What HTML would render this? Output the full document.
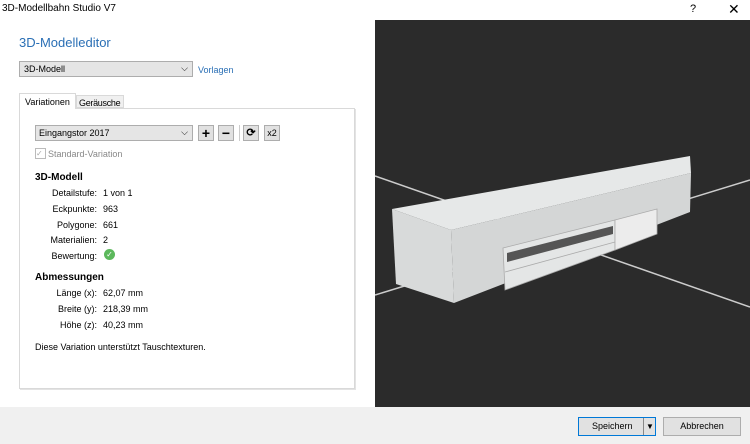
<!DOCTYPE html>
<html><head><style>
body{margin:0;width:750px;height:444px;overflow:hidden;font-family:"Liberation Sans",sans-serif;font-size:9px;color:#000;background:#fff;position:relative}
.a{position:absolute}
.lbl{position:absolute;width:97px;text-align:right;left:0}
.btn{position:absolute;height:16px;border:1px solid #adadad;background:#e1e1e1;box-sizing:border-box;text-align:center;line-height:14px}
</style></head><body>
<div class="a" style="left:2px;top:3px;font-size:10px">3D-Modellbahn Studio V7</div>
<div class="a" style="left:690px;top:3px;font-size:11px">?</div>
<div class="a" style="left:728px;top:1px;font-size:14px">✕</div>
<div class="a" style="left:19px;top:35px;font-size:13px;color:#2a6fb5">3D-Modelleditor</div>
<div class="a" style="left:19px;top:61px;width:174px;height:16px;border:1px solid #adadad;background:#e5e5e5;box-sizing:border-box;padding:2px 4px">3D-Modell<span style="position:absolute;right:4px;top:1px">⌵</span></div>
<div class="a" style="left:198px;top:65px;color:#2a6fb5">Vorlagen</div>
<div class="a" style="left:19px;top:108px;width:336px;height:281px;border:1px solid #d9d9d9;box-sizing:border-box;box-shadow:1px 1px 0 #e3e3e3"></div>
<div class="a" style="left:19px;top:93px;width:57px;height:16px;border:1px solid #d9d9d9;border-bottom:none;background:#fff;padding:3px 5px;box-sizing:border-box">Variationen</div>
<div class="a" style="left:76px;top:95px;width:48px;height:13px;border:1px solid #d9d9d9;background:#f0f0f0;padding:2px 2px;box-sizing:border-box;letter-spacing:-0.3px;white-space:nowrap;overflow:hidden">Geräusche</div>
<div class="a" style="left:35px;top:125px;width:158px;height:16px;border:1px solid #adadad;background:#e5e5e5;box-sizing:border-box;padding:2px 3px">Eingangstor 2017<span style="position:absolute;right:4px;top:1px">⌵</span></div>
<div class="btn" style="left:198px;top:125px;width:16px;font-size:14px;font-weight:bold">+</div>
<div class="btn" style="left:218px;top:125px;width:16px;font-size:14px;font-weight:bold">−</div>
<div class="a" style="left:239px;top:125px;width:1px;height:16px;background:#ccc"></div>
<div class="btn" style="left:243px;top:125px;width:16px;font-size:11px;font-weight:bold">⟳</div>
<div class="btn" style="left:264px;top:125px;width:16px">x2</div>
<div class="a" style="left:35px;top:148px;width:9px;height:9px;border:1px solid #bbb;font-size:8px;color:#aaa;line-height:9px">✓</div>
<div class="a" style="left:48px;top:149px;color:#888">Standard-Variation</div>
<div class="a" style="left:35px;top:172px;font-weight:bold;font-size:10px">3D-Modell</div>
<div class="lbl" style="top:188px">Detailstufe:</div><div class="a" style="left:103px;top:188px">1 von 1</div>
<div class="lbl" style="top:204px">Eckpunkte:</div><div class="a" style="left:103px;top:204px">963</div>
<div class="lbl" style="top:220px">Polygone:</div><div class="a" style="left:103px;top:220px">661</div>
<div class="lbl" style="top:235px">Materialien:</div><div class="a" style="left:103px;top:235px">2</div>
<div class="lbl" style="top:251px">Bewertung:</div><div class="a" style="left:104px;top:249px;width:11px;height:11px;border-radius:50%;background:#5cb85c;color:#fff;font-size:8px;text-align:center;line-height:11px">✓</div>
<div class="a" style="left:35px;top:272px;font-weight:bold;font-size:10px">Abmessungen</div>
<div class="lbl" style="top:288px">Länge (x):</div><div class="a" style="left:103px;top:288px">62,07 mm</div>
<div class="lbl" style="top:304px">Breite (y):</div><div class="a" style="left:103px;top:304px">218,39 mm</div>
<div class="lbl" style="top:320px">Höhe (z):</div><div class="a" style="left:103px;top:320px">40,23 mm</div>
<div class="a" style="left:35px;top:342px">Diese Variation unterstützt Tauschtexturen.</div>
<svg class="a" style="left:375px;top:20px" width="375" height="387">
<rect width="375" height="387" fill="#2b2b2b"/>
<line x1="0" y1="156" x2="375" y2="287" stroke="#ccc" stroke-width="1.5"/>
<line x1="0" y1="275" x2="375" y2="160" stroke="#ccc" stroke-width="1.5"/>
<polygon points="17,189 315,136 316,153 76,210" fill="#e6e8e8"/>
<polygon points="17,189 76,210 79,283 21,264" fill="#d8dada"/>
<polygon points="76,210 316,153 315,192 79,283" fill="#d4d6d6"/>
<polygon points="128,228 240,200 240,230 130,270" fill="#e4e6e6" stroke="#aaa" stroke-width="0.8"/>
<polygon points="240,200 282,189 282,214 240,230" fill="#ececec" stroke="#aaa" stroke-width="0.8"/>
<polygon points="132,233 238,206 238,214 132,242" fill="#555"/>
<line x1="130" y1="252" x2="240" y2="222" stroke="#aaa" stroke-width="0.8"/>
</svg>
<div class="a" style="left:0;top:407px;width:750px;height:37px;background:#f0f0f0"></div>
<div class="a" style="left:578px;top:417px;width:78px;height:19px;border:1px solid #0078d7;background:#e1e1e1;box-sizing:border-box;line-height:17px;padding-left:13px">Speichern<span style="position:absolute;left:64px;top:0;width:1px;height:17px;background:#888"></span><span style="position:absolute;left:67px;top:0;font-size:8px">▼</span></div>
<div class="a" style="left:663px;top:417px;width:78px;height:19px;border:1px solid #adadad;background:#e1e1e1;box-sizing:border-box;line-height:17px;text-align:center">Abbrechen</div>
</body></html>
